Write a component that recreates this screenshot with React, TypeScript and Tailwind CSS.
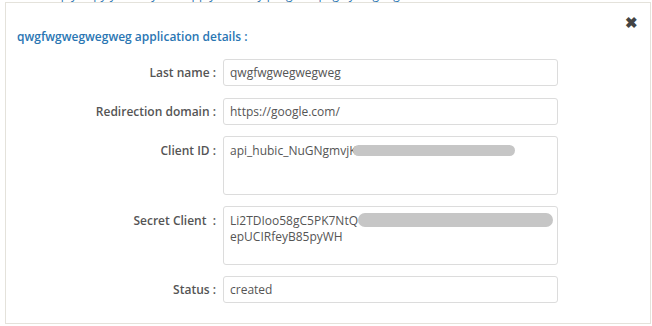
import React from "react";

const font = { fontFamily: '"Open Sans", "Noto Sans", Arial, sans-serif' };

const Field = ({
  label,
  children,
  tall,
  className = "",
}: {
  label: string;
  children: React.ReactNode;
  tall?: boolean;
  className?: string;
}) => (
  <div className={`flex items-start ${className}`}>
    <label
      className={`w-[210px] shrink-0 text-right text-[12px] font-semibold text-[#555] whitespace-pre ${
        tall ? "pt-[6px]" : "leading-[27px]"
      }`}
    >
      {label}
    </label>
    <div
      className={`ml-[7px] w-[335px] rounded-[3px] border border-[#dcdcdc] bg-white px-[6px] text-[12px] text-[#555] ${
        tall ? "h-[59px] pt-[6px] leading-[16px]" : "h-[27px] leading-[25px]"
      }`}
    >
      {children}
    </div>
  </div>
);

const Blur = ({ w, className = "" }: { w: number; className?: string }) => (
  <span
    className={`inline-block h-[11px] rounded-full bg-[#c6c6c6] align-middle ${className}`}
    style={{ width: w }}
  />
);

export default function App() {
  return (
    <div className="min-h-[326px] w-[652px] bg-white" style={font}>
      <div className="h-[2px] overflow-hidden">
        <p className="-mt-[13px] pl-[40px] text-[12px] leading-[16px] text-[#2a76b3] whitespace-nowrap">
          Simply copy your key and apply it to any program page you get go
        </p>
      </div>
      <div className="relative ml-[5px] h-[322px] w-[646px] border border-[#e4e2db] bg-white">
        <button className="absolute right-[12px] top-[12px] text-[15px] font-bold leading-[15px] text-[#444]">
          ✖
        </button>
        <h3 className="ml-[11px] pt-[26px] text-[12px] font-semibold leading-[16px] text-[#2a76b3]">
          qwgfwgwegwegweg application details :
        </h3>
        <div className="mt-[14px]">
          <Field label="Last name :">qwgfwgwegwegweg</Field>
          <Field label="Redirection domain :" className="mt-[12px]">
            https://google.com/
          </Field>
          <Field label="Client ID :" tall className="mt-[11px]">
            <span>api_hubic_NuGNgmvjK</span>
            <Blur w={162} className="-ml-[4px] -mt-[3px]" />
          </Field>
          <Field label={"Secret Client\u00a0 :"} tall className="mt-[11px]">
            <div className="whitespace-nowrap">
              <span>Li2TDIoo58gC5PK7NtQ</span>
              <Blur w={195} className="-mt-[3px] h-[14px]" />
            </div>
            <div>epUCIRfeyB85pyWH</div>
          </Field>
          <Field label="Status :" className="mt-[11px]">
            created
          </Field>
        </div>
      </div>
    </div>
  );
}
